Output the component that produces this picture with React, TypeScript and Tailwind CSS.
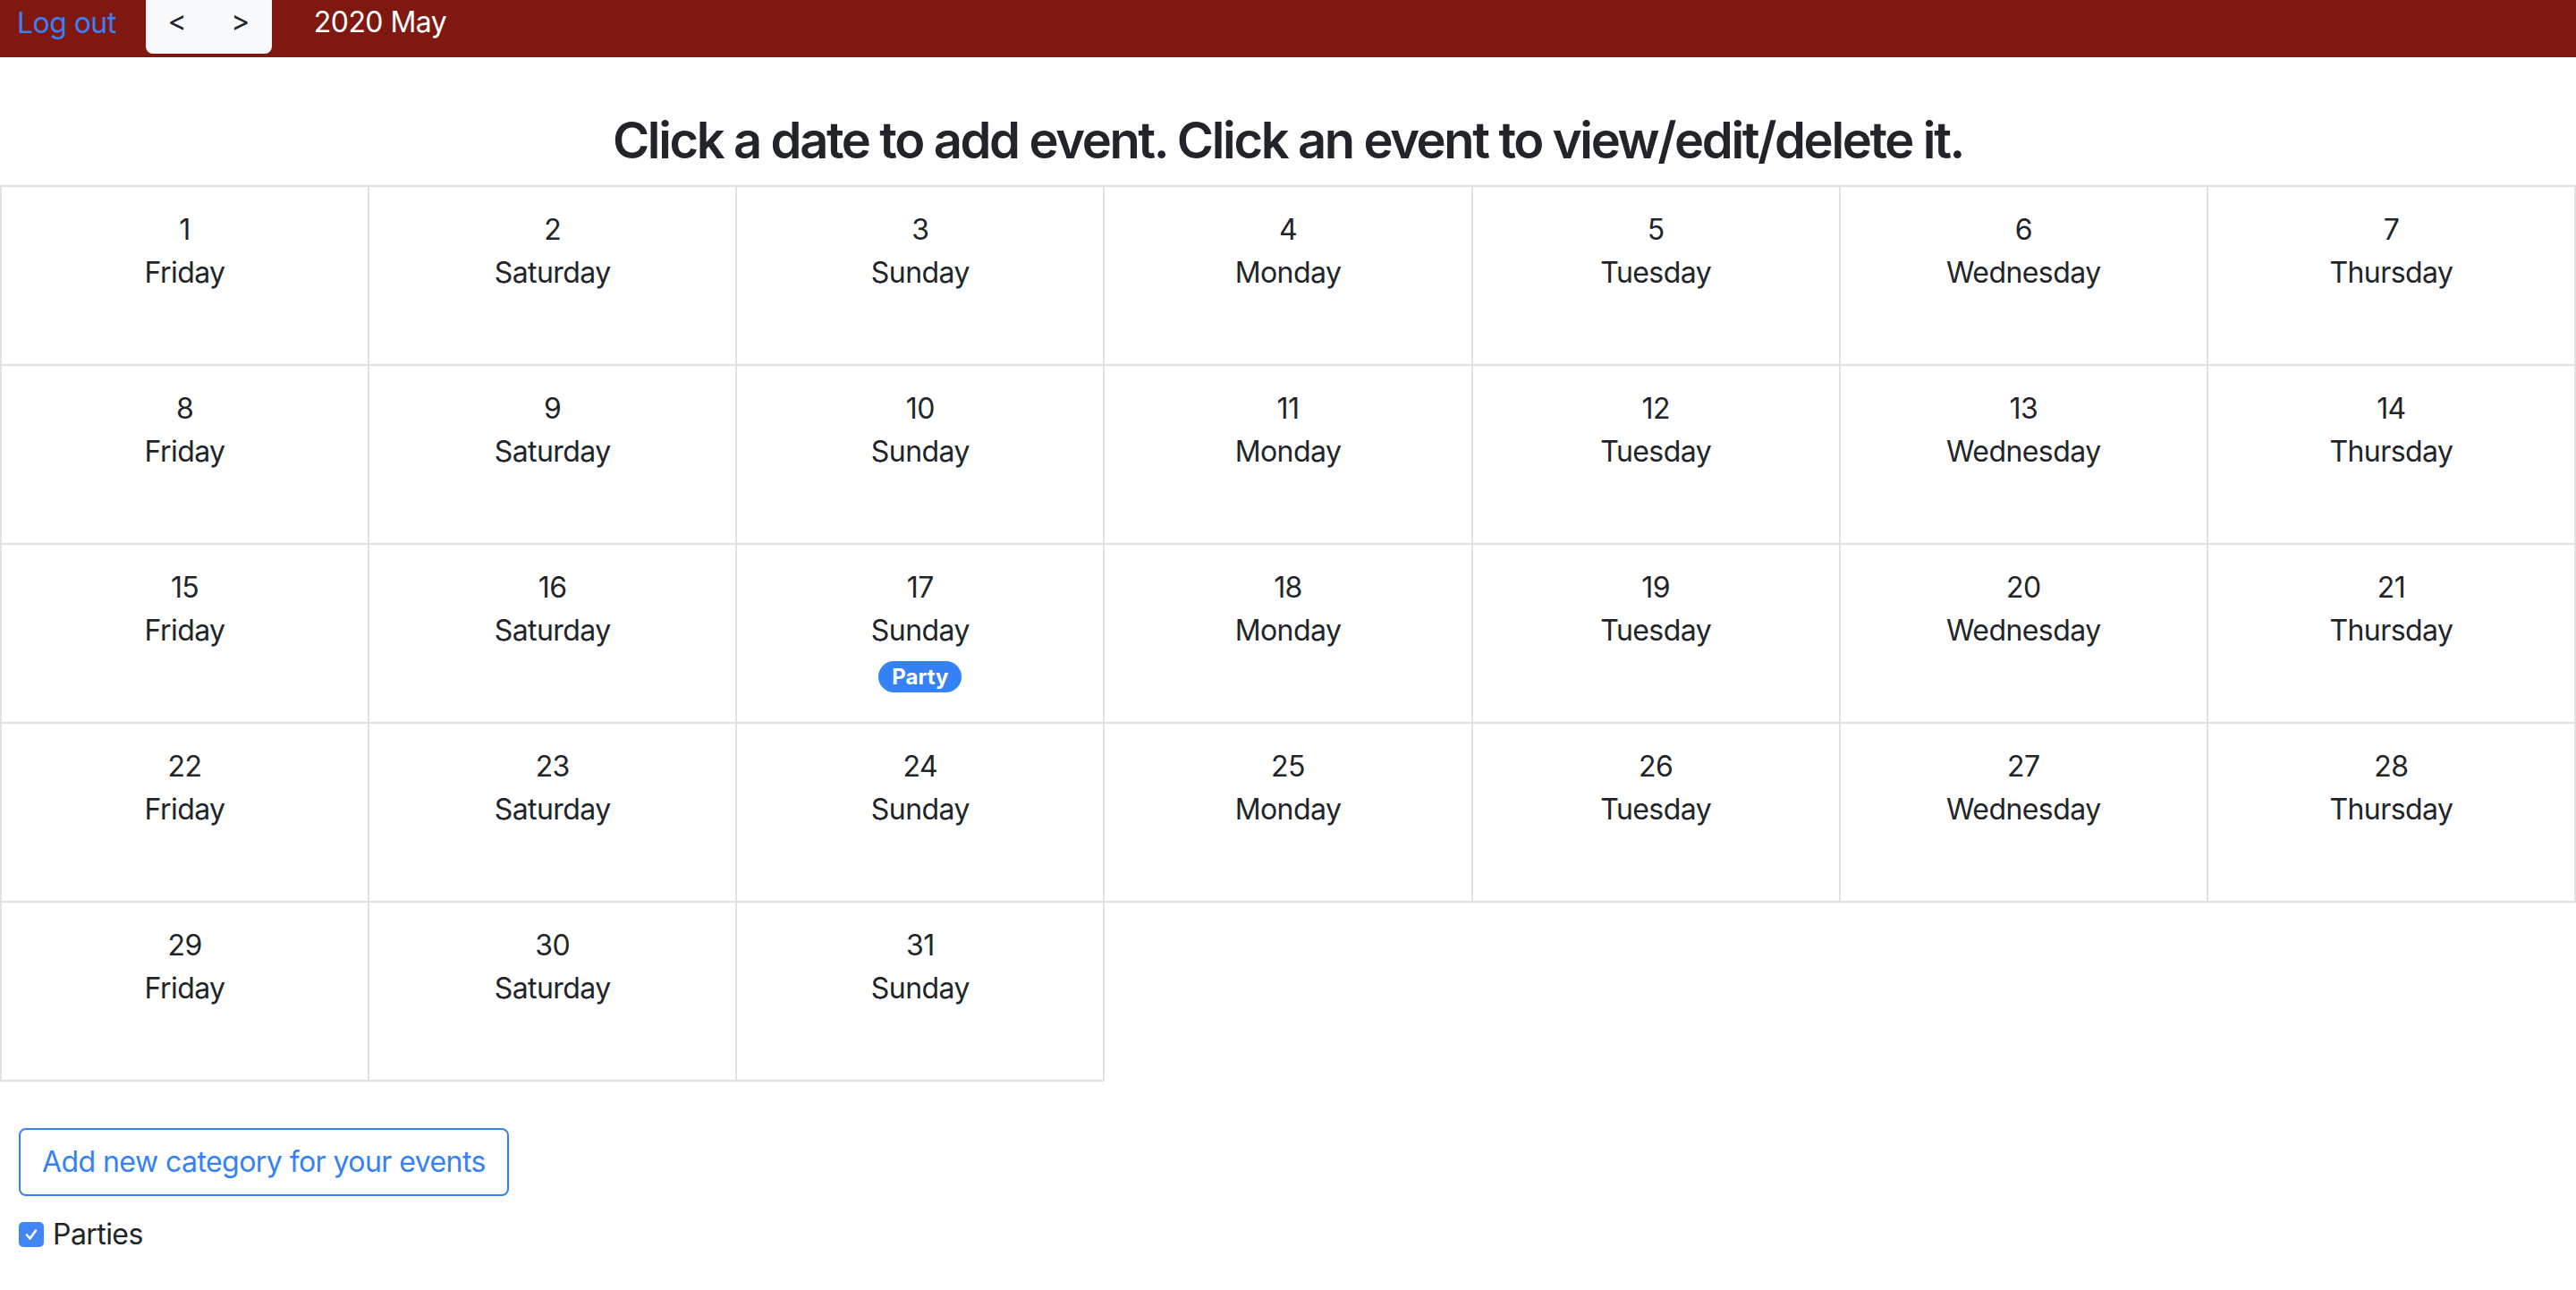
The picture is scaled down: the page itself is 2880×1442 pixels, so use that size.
import React from "react";

const days = ["Friday", "Saturday", "Sunday", "Monday", "Tuesday", "Wednesday", "Thursday"];

export default function App() {
  const cells = Array.from({ length: 31 }, (_, i) => i + 1);
  return (
    <div className="min-h-screen bg-white tracking-[-0.035em] text-[#212529]" style={{ fontFamily: "Inter, 'Noto Sans', sans-serif" }}>
      <div className="flex h-16 items-start bg-[#7f1810]">
        <a className="ml-[19px] mt-[2px] text-[32px] leading-[48px] text-[#3a80f6]">Log out</a>
        <div className="ml-[33px] flex h-[60px] items-start rounded-b-[8px] bg-[#f8f9fa] text-[32px] text-[#212529]">
          <span className="px-[25px] leading-[48px]">&lt;</span>
          <span className="px-[25px] leading-[48px]">&gt;</span>
        </div>
        <div className="ml-[47px] mt-[1px] text-[32px] leading-[48px] text-white">2020 May</div>
      </div>
      <h3 className="mb-[16px] pt-[60px] text-center text-[56px] font-semibold leading-[67px] tracking-[-0.042em]">
        Click a date to add event. Click an event to view/edit/delete it.
      </h3>
      <div className="grid grid-cols-7 border-l-2 border-t-2 border-[#dee2e6]">
        {cells.map((d) => (
          <div key={d} className="flex h-[200px] flex-col items-center border-b-2 border-r-2 border-[#dee2e6] pt-[24px] text-[32px] leading-[48px]">
            <div>{d}</div>
            <div>{days[(d - 1) % 7]}</div>
            {d === 17 && (
              <span className="mt-[10px] inline-flex h-[35px] items-center rounded-full bg-[#3581f6] px-[15px] text-[24px] font-bold leading-none tracking-normal text-white">
                Party
              </span>
            )}
          </div>
        ))}
      </div>
      <div className="px-[21px] pt-[52px]">
        <button className="h-[76px] rounded-[8px] border-2 border-[#3581f6] px-[24px] text-[32px] leading-[48px] text-[#3581f6]">
          Add new category for your events
        </button>
        <label className="mt-[19px] flex items-center gap-[10px] text-[32px] leading-[48px]">
          <span className="flex h-[28px] w-[28px] items-center justify-center rounded-[5px] bg-[#4286f5]">
            <svg width="18" height="18" viewBox="0 0 18 18" fill="none">
              <path d="M4 9.5 L7.5 13.5 L14 4.5" stroke="white" strokeWidth="2.6" strokeLinecap="round" strokeLinejoin="round" />
            </svg>
          </span>
          <span>Parties</span>
        </label>
      </div>
    </div>
  );
}
